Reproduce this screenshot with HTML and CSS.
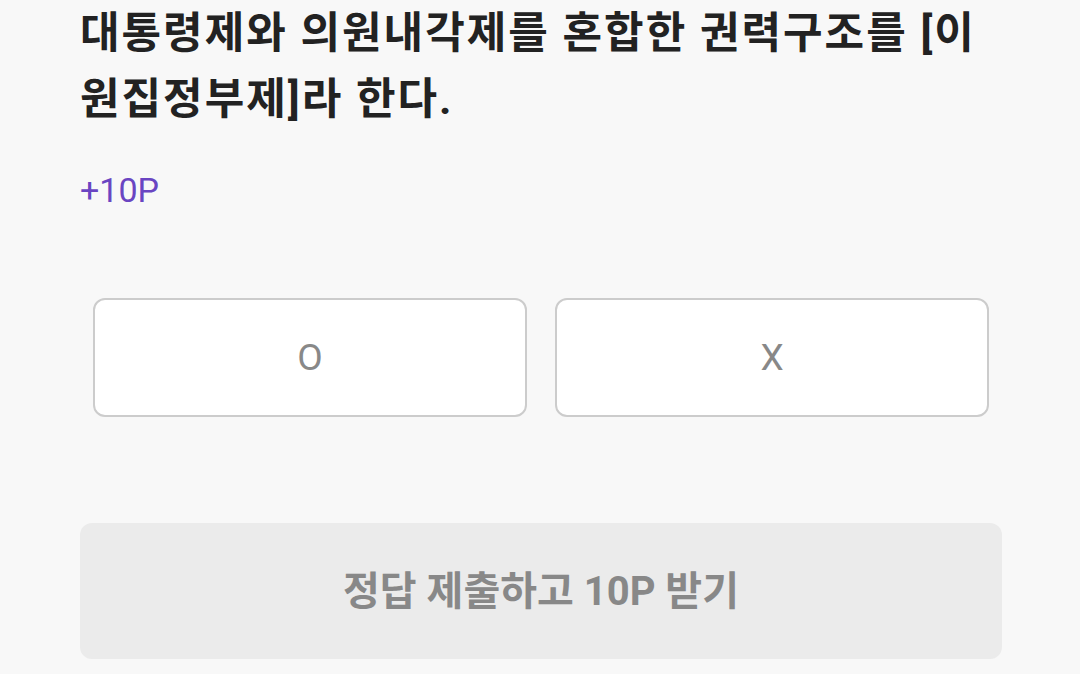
FILE: index.html
```html
<!DOCTYPE html>
<html lang="ko">
<head>
  <meta charset="UTF-8">
  <meta name="viewport" content="width=device-width, initial-scale=1.0">
  <title>OX 퀴즈</title>
  <link rel="stylesheet" href="styles.css">
</head>
<body>
  <div class="quiz">
    <h1 class="question">대통령제와 의원내각제를 혼합한 권력구조를 [이원집정부제]라 한다.</h1>
    <p class="reward">+10P</p>

    <div class="choices">
      <button class="choice">O</button>
      <button class="choice">X</button>
    </div>

    <button class="submit" disabled>정답 제출하고 10P 받기</button>
  </div>
</body>
</html>
```

FILE: styles.css
```css
html, body {
  margin: 0;
  padding: 0;
  background-color: #f8f8f8;
}
body {
  font-family: Roboto, "Noto Sans CJK KR", sans-serif;
}
.quiz {
  padding: 0 78px 0 80px;
}
.question {
  margin: 0;
  font-family: Roboto, "Noto Sans CJK KR", sans-serif;
  font-size: 43px;
  font-weight: 700;
  letter-spacing: 2px;
  line-height: 66px;
  color: #222;
}
.reward {
  margin: 38px 0 0;
  font-size: 34px;
  line-height: 40px;
  color: #6a45c2;
}
.choices {
  display: grid;
  grid-template-columns: 1fr 1fr;
  gap: 28px;
  margin: 88px 13px 0;
}
.choice {
  height: 119px;
  background-color: #fff;
  border: 2px solid #cccccc;
  border-radius: 12px;
  font-family: Roboto, sans-serif;
  font-size: 37px;
  color: #888;
}
.submit {
  display: block;
  width: 100%;
  height: 136px;
  margin-top: 106px;
  padding: 0 0 6px;
  background-color: #ebebeb;
  border: none;
  border-radius: 12px;
  font-family: Roboto, "Noto Sans CJK KR", sans-serif;
  font-size: 40px;
  font-weight: 700;
  color: #888;
}
```
